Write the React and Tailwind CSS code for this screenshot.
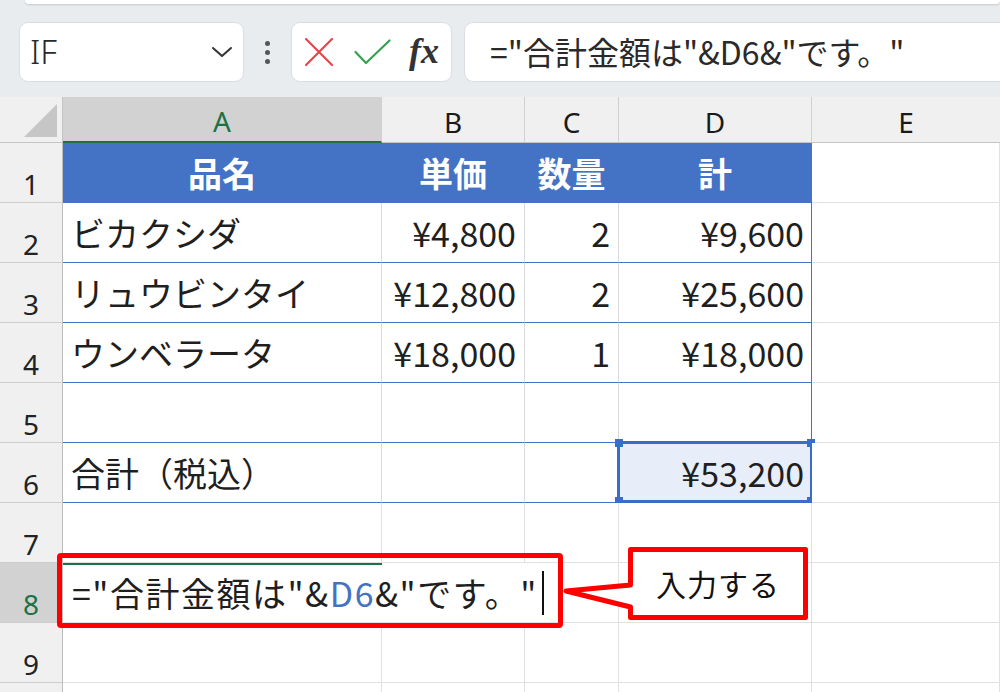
import React from 'react';

const CELL_FONT = "font-['Noto_Sans_CJK_JP',sans-serif]";
const HEAD_FONT = "font-['Noto_Sans','Noto_Sans_CJK_JP',sans-serif]";

const rows = [
  { n: 1, head: true, cells: ['品名', '単価', '数量', '計'] },
  { n: 2, cells: ['ビカクシダ', '¥4,800', '2', '¥9,600'] },
  { n: 3, cells: ['リュウビンタイ', '¥12,800', '2', '¥25,600'] },
  { n: 4, cells: ['ウンベラータ', '¥18,000', '1', '¥18,000'] },
  { n: 5, cells: ['', '', '', ''] },
  { n: 6, cells: ['合計（税込）', '', '', '¥53,200'], selected: true },
];

function RowHead({ n, active }) {
  return (
    <div
      className={`h-[60px] border-b border-r border-b-[#cdcdcd] border-r-[#bcbcbc] flex items-end justify-center pb-[4px] text-[28px] leading-[28px] ${HEAD_FONT} ${
        active ? 'bg-[#d2d2d2] text-[#1e7145]' : 'bg-[#f0f0f0] text-[#222]'
      }`}
    >
      {n}
    </div>
  );
}

function Cell({ className = '', children }) {
  return (
    <div
      className={`relative h-[60px] border-b border-r flex items-center whitespace-nowrap px-[8px] text-[34px] leading-none text-[#1f1f1f] ${CELL_FONT} ${className}`}
    >
      {children}
    </div>
  );
}

function ColHead({ label, active, last }) {
  return (
    <div
      className={`h-[46px] flex items-center justify-center pt-[4px] text-[28px] ${HEAD_FONT} ${
        active
          ? 'bg-[#d2d2d2] text-[#1e7145] border-b-2 border-b-[#1e7145]'
          : 'bg-[#f0f0f0] text-[#1a1a1a] border-b border-b-[#c4c4c4]'
      } ${last ? '' : 'border-r border-r-[#d0d0d0]'}`}
    >
      {label}
    </div>
  );
}

function TableRow({ row }) {
  if (row.head) {
    return (
      <>
        <RowHead n={row.n} />
        {row.cells.map((c, i) => (
          <Cell
            key={i}
            className="justify-center bg-[#4472c4] text-white font-bold border-b-[#4472c4] border-r-[#4472c4]"
          >
            {c}
          </Cell>
        ))}
        <Cell className="bg-white border-b-[#e1e1e1] border-r-[#e1e1e1]" />
      </>
    );
  }
  return (
    <>
      <RowHead n={row.n} />
      <Cell className="bg-white border-b-[#4472c4] border-r-[#dadada]">{row.cells[0]}</Cell>
      <Cell className="bg-white justify-end border-b-[#4472c4] border-r-[#dadada]">{row.cells[1]}</Cell>
      <Cell className="bg-white justify-end border-b-[#4472c4] border-r-[#dadada]">{row.cells[2]}</Cell>
      <Cell
        className={`justify-end pr-[7px] border-b-[#4472c4] border-r-[#4472c4] ${
          row.selected ? 'bg-[#e8eef9]' : 'bg-white'
        }`}
      >
        {row.cells[3]}
        {row.selected && (
          <div className="absolute -left-[2px] -top-[2px] -right-[2px] -bottom-[1px] border-[3px] border-[#3a6ec6]">
            <span className="absolute -left-[5px] -top-[5px] w-[8px] h-[8px] bg-[#3a6ec6]" />
            <span className="absolute -right-[5px] -top-[5px] w-[8px] h-[8px] bg-[#3a6ec6]" />
            <span className="absolute -left-[5px] -bottom-[5px] w-[8px] h-[8px] bg-[#3a6ec6]" />
            <span className="absolute -right-[5px] -bottom-[5px] w-[8px] h-[8px] bg-[#3a6ec6]" />
          </div>
        )}
      </Cell>
      <Cell className="bg-white border-b-[#e1e1e1] border-r-[#e1e1e1]" />
    </>
  );
}

function EmptyRow({ n }) {
  return (
    <>
      <RowHead n={n} />
      <Cell className="bg-white border-b-[#e1e1e1] border-r-[#e1e1e1]" />
      <Cell className="bg-white border-b-[#e1e1e1] border-r-[#e1e1e1]" />
      <Cell className="bg-white border-b-[#e1e1e1] border-r-[#e1e1e1]" />
      <Cell className="bg-white border-b-[#e1e1e1] border-r-[#e1e1e1]" />
      <Cell className="bg-white border-b-[#e1e1e1] border-r-[#e1e1e1]" />
    </>
  );
}

function FormulaText() {
  return (
    <>
      =&quot;合計金額は&quot;&amp;<span className="text-[#4472c4]">D6</span>&amp;&quot;です。&quot;
    </>
  );
}

export default function App() {
  return (
    <div className="w-[1000px] h-[692px] overflow-hidden bg-[#e9ecef] select-none">
      {/* formula bar */}
      <div className="h-[97px]">
        <div className="ml-[25px] h-[4px] bg-white rounded-b-[8px] shadow-[0_1px_2px_rgba(0,0,0,0.15)]" />
        <div className="mt-[18px] flex items-center h-[60px]">
          <div className="ml-[19px] w-[225px] h-[60px] bg-white rounded-[9px] border border-[#dadde1] flex items-center justify-between pl-[10px] pr-[10px]">
            <span className={`text-[33px] font-light text-[#2a2a2a] ${HEAD_FONT}`}>IF</span>
            <svg width="22" height="14" viewBox="0 0 22 14">
              <path d="M2 3 L11 11 L20 3" fill="none" stroke="#333" strokeWidth="2" strokeLinecap="round" strokeLinejoin="round" />
            </svg>
          </div>
          <div className="w-[47px] flex flex-col items-center gap-[4px]">
            <span className="w-[5px] h-[5px] rounded-full bg-[#555]" />
            <span className="w-[5px] h-[5px] rounded-full bg-[#555]" />
            <span className="w-[5px] h-[5px] rounded-full bg-[#555]" />
          </div>
          <div className="w-[161px] h-[60px] bg-white rounded-[9px] border border-[#dadde1] flex items-center pl-[13px]">
            <svg width="28" height="28" viewBox="0 0 28 28">
              <path d="M1 1 L27 27 M27 1 L1 27" stroke="#e5474b" strokeWidth="2.2" strokeLinecap="round" />
            </svg>
            <svg width="37" height="26" viewBox="0 0 37 26" className="ml-[21px]">
              <path d="M1.5 13 L12 24 L35.5 1.5" fill="none" stroke="#35a150" strokeWidth="2.2" strokeLinecap="round" strokeLinejoin="round" />
            </svg>
            <span className="ml-[18px] -mt-[2px] text-[36px] italic font-semibold text-[#333] font-['Liberation_Serif',serif]">fx</span>
          </div>
          <div className="ml-[12px] flex-1 h-[60px] bg-white rounded-l-[9px] border border-r-0 border-[#dadde1] flex items-center pl-[25px] pb-[2px]">
            <span className={`text-[32px] leading-none text-[#2a2a2a] whitespace-nowrap ${CELL_FONT}`}>
              =&quot;合計金額は&quot;&amp;D6&amp;&quot;です。&quot;
            </span>
          </div>
        </div>
      </div>

      {/* sheet */}
      <div className="relative grid grid-cols-[63px_319px_143px_94px_193px_188px]">
        <div className="h-[46px] bg-[#f0f0f0] border-b border-r border-b-[#c4c4c4] border-r-[#c4c4c4] flex items-end justify-end pr-[5px] pb-[5px]">
          <svg width="33" height="33" viewBox="0 0 33 33">
            <path d="M33 0 L33 33 L0 33 Z" fill="#c6c6c6" />
          </svg>
        </div>
        <ColHead label="A" active />
        <ColHead label="B" />
        <ColHead label="C" />
        <ColHead label="D" />
        <ColHead label="E" last />

        {rows.map((r) => (
          <TableRow key={r.n} row={r} />
        ))}
        <EmptyRow n={7} />

        {/* row 8 - editing */}
        <RowHead n={8} active />
        <Cell className="col-span-3 bg-white border-b-[#e1e1e1] border-r-[#e1e1e1] px-0">
          <div className="absolute left-0 top-0 w-[494px] h-[59px] bg-white z-10 flex items-center pl-[9px]">
            <span className="absolute left-0 top-0 w-[319px] h-[2px] bg-[#1e7145]" />
            <span className="text-[34px] leading-none tracking-[1.5px] text-[#1f1f1f]">
              <FormulaText />
            </span>
            <span className="ml-[4px] w-[2px] h-[44px] bg-[#111]" />
          </div>
        </Cell>
        <Cell className="bg-white border-b-[#e1e1e1] border-r-[#e1e1e1]" />
        <Cell className="bg-white border-b-[#e1e1e1] border-r-[#e1e1e1]" />

        <EmptyRow n={9} />
        <EmptyRow n="" />

        {/* annotation: red box around the edited cell */}
        <div className="absolute left-[57px] top-[456px] w-[506px] h-[75px] border-[5px] border-[#ff0000] rounded-[4px] z-20" />

        {/* annotation: callout */}
        <svg className="absolute left-[560px] top-[448px] z-30" width="250" height="80" viewBox="0 0 250 80">
          <path
            d="M70.5 4.5 H245.5 V72.5 H70.5 V62 L6 46 L70.5 40 Z"
            fill="#fff"
            stroke="#ff0000"
            strokeWidth="5"
            strokeLinejoin="round"
          />
        </svg>
        <div className={`absolute left-[628px] top-[450px] w-[180px] h-[73px] z-40 flex items-center justify-center text-[30px] tracking-[1px] text-[#111] ${CELL_FONT}`}>
          入力する
        </div>
      </div>
    </div>
  );
}
